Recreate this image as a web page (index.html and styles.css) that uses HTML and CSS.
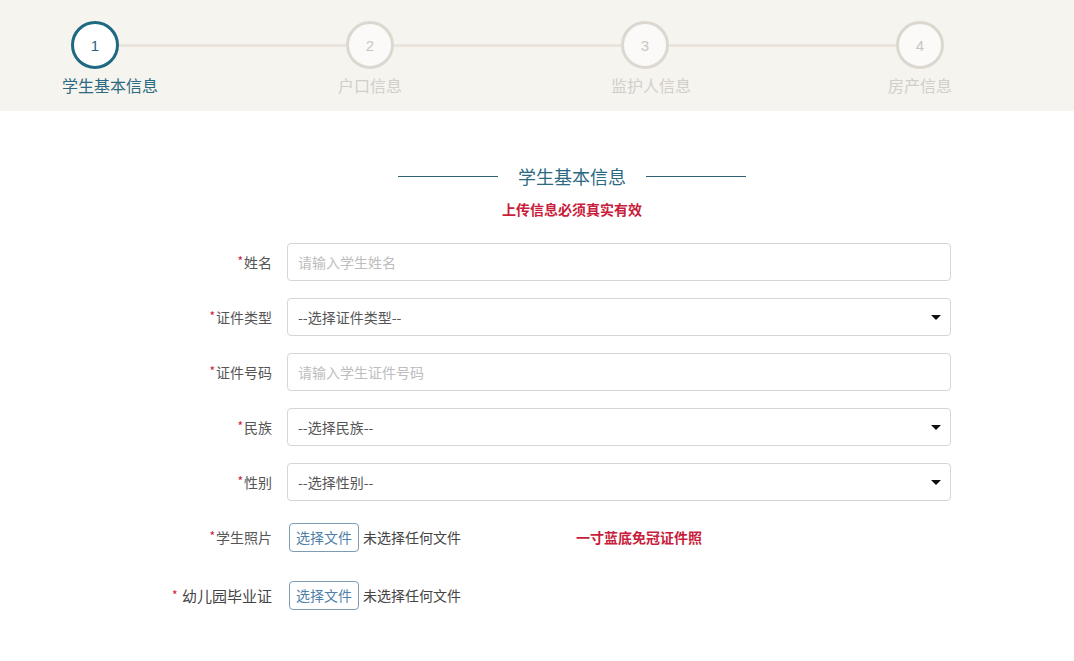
FILE: index.html
```html
<!DOCTYPE html>
<html lang="zh">
<head>
<meta charset="utf-8">
<title>学生基本信息</title>
<link rel="stylesheet" href="styles.css">
</head>
<body>
<header class="steps-band">
  <div class="steps">
    <div class="step active"><div class="circle">1</div><div class="step-label shift-1">学生基本信息</div></div>
    <div class="step-line"></div>
    <div class="step"><div class="circle">2</div><div class="step-label">户口信息</div></div>
    <div class="step-line"></div>
    <div class="step"><div class="circle">3</div><div class="step-label shift-3">监护人信息</div></div>
    <div class="step-line"></div>
    <div class="step"><div class="circle">4</div><div class="step-label">房产信息</div></div>
  </div>
</header>
<main class="content">
  <div class="section-title"><span class="rule"></span><h2>学生基本信息</h2><span class="rule"></span></div>
  <p class="notice">上传信息必须真实有效</p>
  <form class="form">
    <div class="row">
      <label class="label"><span class="req">*</span>姓名</label>
      <div class="field"><span class="placeholder">请输入学生姓名</span></div>
    </div>
    <div class="row">
      <label class="label"><span class="req">*</span>证件类型</label>
      <div class="field select"><span class="value">--选择证件类型--</span><span class="caret"></span></div>
    </div>
    <div class="row">
      <label class="label"><span class="req">*</span>证件号码</label>
      <div class="field"><span class="placeholder">请输入学生证件号码</span></div>
    </div>
    <div class="row">
      <label class="label"><span class="req">*</span>民族</label>
      <div class="field select"><span class="value">--选择民族--</span><span class="caret"></span></div>
    </div>
    <div class="row">
      <label class="label"><span class="req">*</span>性别</label>
      <div class="field select"><span class="value">--选择性别--</span><span class="caret"></span></div>
    </div>
    <div class="row file-row">
      <label class="label"><span class="req">*</span>学生照片</label>
      <div class="file"><span class="file-btn">选择文件</span><span class="file-none">未选择任何文件</span></div>
      <span class="hint">一寸蓝底免冠证件照</span>
    </div>
    <div class="row file-row last">
      <label class="label big"><span class="req">*</span>&nbsp;幼儿园毕业证</label>
      <div class="file"><span class="file-btn">选择文件</span><span class="file-none">未选择任何文件</span></div>
    </div>
  </form>
</main>
</body>
</html>
```
FILE: styles.css
```css
* { box-sizing: border-box; }
html, body { margin: 0; padding: 0; }
body {
  font-family: "Microsoft YaHei", "Noto Sans CJK SC", "Noto Sans", sans-serif;
  background: #fff;
  color: #555;
  width: 1074px;
  height: 661px;
  overflow: hidden;
}
.steps-band {
  background: #f6f4ef;
  height: 111px;
  padding-top: 21px;
}
.steps {
  display: flex;
  align-items: flex-start;
  margin-left: 71px;
  width: 873px;
}
.step {
  width: 48px;
  flex: none;
  display: flex;
  flex-direction: column;
  align-items: center;
}
.circle {
  width: 48px;
  height: 48px;
  border-radius: 50%;
  border: 3px solid #dcd8d0;
  background: #fbfaf8;
  color: #c9c6c0;
  font-family: "Liberation Sans", Arial, sans-serif;
  font-size: 15px;
  display: flex;
  align-items: center;
  justify-content: center;
}
.step-label {
  white-space: nowrap;
  font-size: 16px;
  line-height: 20px;
  margin-top: 6px;
  color: #d2cfca;
}
.step-label.shift-1 { margin-left: 30px; }
.step-label.shift-3 { margin-left: 12px; }
.step.active .circle { border-color: #1e6882; color: #1e6882; background: #fff; }
.step.active .step-label { color: #2c6a82; }
.step-line {
  flex: 1;
  height: 3px;
  margin-top: 23px;
  background: #e9e5dc;
}
.content {
  margin-left: 193px;
  width: 758px;
  padding-top: 52px;
}
.section-title {
  display: flex;
  align-items: center;
  justify-content: center;
  gap: 20px;
  height: 26px;
}
.section-title .rule {
  width: 100px;
  height: 1px;
  background: #2c5f78;
}
.section-title h2 {
  margin: 0;
  font-size: 18px;
  font-weight: normal;
  color: #2c6a82;
  line-height: 26px;
}
.notice {
  margin: 12px 0 0;
  text-align: center;
  color: #c81d3c;
  font-size: 14px;
  font-weight: bold;
  line-height: 16px;
}
.form {
  margin-top: 26px;
  display: flex;
  flex-direction: column;
  gap: 17px;
}
.row {
  display: flex;
  align-items: center;
  gap: 15px;
  height: 38px;
}
.label {
  width: 79px;
  flex: none;
  display: flex;
  justify-content: flex-end;
  align-items: baseline;
  font-size: 14px;
  color: #555;
  white-space: nowrap;
}
.label.big { font-size: 15px; color: #444; }
.req { color: #c81d3c; font-size: 12px; margin-right: 1px; position: relative; top: -2px; }
.field {
  flex: 1;
  height: 38px;
  border: 1px solid #d6d6d6;
  border-radius: 4px;
  display: flex;
  align-items: center;
  padding: 0 9px 0 10px;
  font-size: 14px;
  background: #fff;
}
.placeholder { color: #bdbdbd; }
.value { color: #555; flex: 1; }
.caret {
  width: 0;
  height: 0;
  border-left: 5px solid transparent;
  border-right: 5px solid transparent;
  border-top: 5px solid #111;
}
.file-row { height: 28px; margin-top: 5px; }
.file-row.last { margin-top: 13px; }
.file {
  display: flex;
  align-items: center;
  gap: 4px;
  margin-left: 2px;
  width: 280px;
  flex: none;
}
.file-btn {
  border: 1px solid #7d9cb4;
  border-radius: 4px;
  height: 29px;
  width: 70px;
  justify-content: center;
  display: flex;
  align-items: center;
  color: #4f7fa8;
  font-size: 14px;
  background: #fff;
}
.file-none { font-size: 14px; color: #444; }
.hint {
  margin-left: -8px;
  color: #c81d3c;
  font-size: 14px;
  font-weight: bold;
}
```
